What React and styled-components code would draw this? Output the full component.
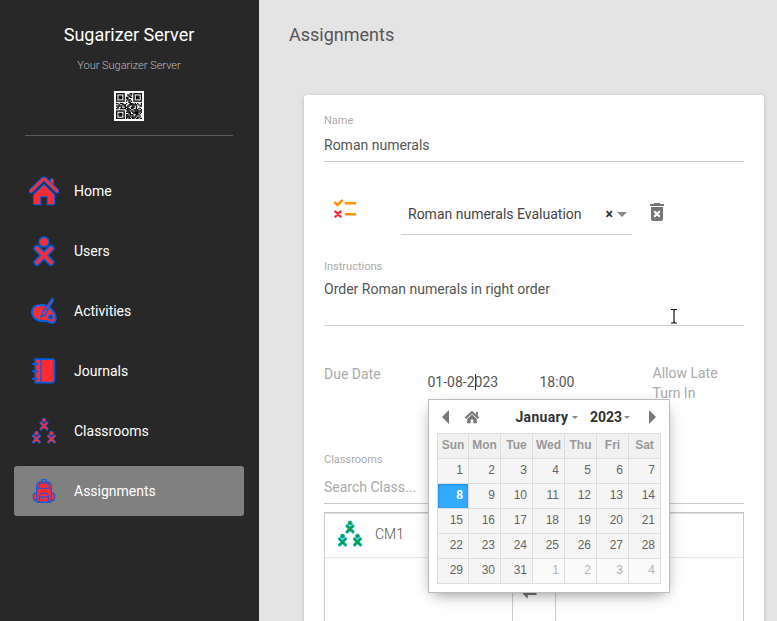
import React from "react";
import styled, { createGlobalStyle, css } from "styled-components";

const GlobalStyle = createGlobalStyle`
  *, *::before, *::after { box-sizing: border-box; }
  body {
    margin: 0;
    background: #e4e4e4;
    font-family: Roboto, "Liberation Sans", sans-serif;
    font-size: 14px;
    color: #555;
    overflow: hidden;
  }
`;

const RED = "#ff2b34";
const BLUE = "#005fe4";
const ORANGE = "#ff9300";

/* ---------- layout ---------- */

const Page = styled.div`
  display: flex;
  height: 621px;
  overflow: hidden;
  position: relative;
`;

const Sidebar = styled.aside`
  width: 259px;
  flex: none;
  background: #282828;
  color: #fff;
`;

const Brand = styled.header`
  margin: 0 26px 0 25px;
  height: 136px;
  padding-top: 23px;
  border-bottom: 1px solid #5a5a5a;
  display: flex;
  flex-direction: column;
  align-items: center;
`;

const BrandTitle = styled.div`
  font-size: 18px;
  line-height: 24px;
`;

const BrandSub = styled.div`
  margin-top: 11px;
  font-size: 11px;
  font-weight: 300;
  line-height: 16px;
  color: #bbb;
`;

const QrFrame = styled.div`
  margin-top: 17px;
  width: 30px;
  height: 30px;
  padding: 2px;
  background: #fff;
`;

const Nav = styled.nav`
  margin: 30px 15px 0 14px;
  display: flex;
  flex-direction: column;
  gap: 10px;
`;

const NavItem = styled.a`
  display: flex;
  align-items: center;
  gap: 15px;
  height: 50px;
  padding-left: 15px;
  border-radius: 3px;
  font-size: 14px;
  background: ${(p) => (p.$active ? "#808080" : "transparent")};
`;

const Main = styled.main`
  flex: 1;
  min-width: 0;
  padding: 0 13px 0 45px;
`;

const PageTitle = styled.h1`
  margin: 0 0 0 -15px;
  height: 95px;
  padding-top: 23px;
  font-size: 18px;
  font-weight: 400;
  line-height: 24px;
`;

const Card = styled.section`
  height: 560px;
  padding: 19px 20px;
  background: #fff;
  border-radius: 3px;
  box-shadow: 0 1px 4px rgba(0, 0, 0, 0.18);
`;

/* ---------- form ---------- */

const Label = styled.div`
  font-size: 11px;
  line-height: 14px;
  color: #aaa;
`;

const Field = styled.div`
  height: ${(p) => p.$height}px;
  padding-top: ${(p) => p.$top}px;
  padding-left: ${(p) => p.$indent || 0}px;
  width: ${(p) => (p.$width ? `${p.$width}px` : "auto")};
  border-bottom: 1px solid #ccc;
  line-height: 20px;
  color: ${(p) => (p.$muted ? "#aaa" : "#555")};
`;

const EvaluationRow = styled.div`
  display: flex;
  height: 98px;
  padding: 32px 0 0 9px;
`;

const SelectBox = styled(Field)`
  display: flex;
  margin-left: 44px;
  color: #444;
`;

const SelectValue = styled.span`
  width: 197.5px;
`;

const ClearMark = styled.span`
  width: 11.5px;
  font-weight: 700;
  color: #333;
`;

const Caret = styled.span`
  align-self: flex-start;
  margin-top: ${(p) => p.$top || 0}px;
  border: ${(p) => p.$size}px solid transparent;
  border-top-color: #888;
  border-bottom: 0;
`;

const ChecklistSlot = styled.div`
  padding-top: 1px;
`;

const TrashSlot = styled.div`
  margin-left: 13px;
  padding-top: 6px;
`;

const DueRow = styled.div`
  display: grid;
  grid-template-columns: 91.5px 100px 101px 80px;
  column-gap: 12px;
  height: 127px;
  padding-top: 37px;
  line-height: 20px;
  color: #aaa;
`;

const DueLabel = styled.span`
  padding-top: 1px;
`;

const TextCaret = styled.i`
  display: inline-block;
  width: 1px;
  height: 16px;
  margin-right: -1px;
  vertical-align: -3px;
  background: #222;
`;

const Lists = styled.div`
  display: flex;
  justify-content: space-between;
  margin-top: 8px;
  height: 160px;
  border-top: 1px solid #c4c4c4;
  box-shadow: inset 0 1px 0 #e2e2e2;
`;

const ClassList = styled.div`
  width: 189px;
  border: solid #ccc;
  border-width: 0 1px;
`;

const ClassItem = styled.div`
  height: 45px;
  display: flex;
  align-items: center;
  padding: 0 0 2px 10px;
  gap: 10px;
  border-bottom: 1px solid #e6e6e6;
  font-weight: 300;
`;

const Transfer = styled.div`
  padding-top: 62px;
  line-height: 0;
`;

/* ---------- date picker ---------- */

const Picker = styled.div`
  position: absolute;
  left: 428px;
  top: 399px;
  width: 242px;
  height: 194px;
  padding: 8px;
  background: #fff;
  border: 1px solid #bbb;
  box-shadow: 0 5px 15px -5px rgba(0, 0, 0, 0.5);
  color: #333;
`;

const PickerBar = styled.div`
  display: flex;
  align-items: center;
  height: 18px;
  margin-bottom: 7px;
  padding-left: 5px;
`;

const Arrow = styled.span`
  border: solid transparent;
  border-width: 7px 0;
  ${(p) =>
    p.$right
      ? css`border-left: 7px solid #777; margin-left: 19px;`
      : css`border-right: 7px solid #777;`}
`;

const HomeSlot = styled.span`
  margin: 0 0 0 15px;
  line-height: 0;
`;

const PickerLabel = styled.span`
  display: flex;
  align-items: center;
  gap: ${(p) => p.$gap}px;
  margin-left: ${(p) => p.$left}px;
  width: ${(p) => p.$width}px;
  font-size: 14px;
  font-weight: 700;
  letter-spacing: ${(p) => p.$tracking || 0}px;
  line-height: 18px;
`;

const Days = styled.div`
  display: grid;
  grid-template-columns: 31px repeat(6, 32px);
  grid-auto-rows: 25px;
  width: 224px;
  border: solid #ddd;
  border-width: 1px 0 0 1px;
  font-family: "Liberation Sans", Arial, sans-serif;
  font-size: 12px;
`;

const Day = styled.div`
  border: solid #ddd;
  border-width: 0 1px 1px 0;
  background: ${(p) => (p.$other ? "#fafafa" : "#f5f5f5")};
  color: ${(p) => (p.$other ? "#b3b3b3" : "#666")};
  padding-right: 5px;
  text-align: right;
  line-height: 23px;
  ${(p) =>
    p.$current &&
    css`
      background: #3af;
      color: #fff;
      font-weight: 700;
      box-shadow: inset 0 1px 3px #178fe5;
    `}
`;

const Weekday = styled(Day)`
  padding-right: 0;
  background: #f1f1f1;
  color: #999;
  font-weight: 700;
  text-align: center;
`;

const Pointer = styled.svg`
  position: absolute;
  left: 669px;
  top: 307px;
`;

/* ---------- icons ---------- */

const Kid = ({ fill = RED, stroke = BLUE }) => (
  <g strokeLinecap="round">
    <path d="M8 12.4 22 26.4M22 12.4 8 26.4" stroke={stroke} strokeWidth="7" />
    <circle cx="15" cy="6" r="4.8" fill={fill} stroke={stroke} strokeWidth="1.7" />
    <path d="M8 12.4 22 26.4M22 12.4 8 26.4" stroke={fill} strokeWidth="3.6" />
  </g>
);

const Svg30 = ({ children }) => (
  <svg width="30" height="30" viewBox="0 0 30 30" fill="none">{children}</svg>
);

const HomeIcon = () => (
  <Svg30>
    <path d="M23 10V4" stroke={BLUE} strokeWidth="4.2" strokeLinecap="round" />
    <path d="M23 10V4" stroke={RED} strokeWidth="2" strokeLinecap="round" />
    <path d="M2 15 13.8 3.6Q15 2.5 16.2 3.6L28 15" stroke={BLUE} strokeWidth="4.8" strokeLinecap="round" />
    <path d="M2 15 13.8 3.6Q15 2.5 16.2 3.6L28 15" stroke={RED} strokeWidth="2.7" strokeLinecap="round" />
    <path
      d="M15 8.4 4.4 18.6V27Q4.4 28.8 6.2 28.8H11.8V20.8H18.2V28.8H23.8Q25.6 28.8 25.6 27V18.6Z"
      fill={RED} stroke={BLUE} strokeWidth="1.1"
    />
  </Svg30>
);

const UserIcon = () => <Svg30><Kid /></Svg30>;

const PaletteIcon = () => (
  <Svg30>
    <path
      d="M3 15.5C3 11 7.5 9 13 9C21 9 27 17.5 26.8 22.8C26.6 26.8 24 27.8 20.5 26C16.5 24 12 26 8 23.8C4.8 22 3 19 3 15.5Z"
      fill={RED} stroke={BLUE} strokeWidth="2"
    />
    <circle cx="21.7" cy="21" r="1.8" fill="#282828" stroke={BLUE} strokeWidth="1.8" />
    <path
      d="M22.8 2.8Q24.8 2.5 24 5L17.8 15Q17.5 19.5 11.5 20.8Q13.2 19.2 13.2 17Q14 13.5 16 13.2Z"
      fill={RED} stroke={BLUE} strokeWidth="1.5" strokeLinejoin="round"
    />
  </Svg30>
);

const JournalIcon = () => (
  <Svg30>
    <path d="M6.3 3.2H23Q25.3 3.2 25.3 5.5V24Q25.3 26.6 23 26.6H6.3Z" fill={RED} stroke={BLUE} strokeWidth="1.8" />
    <path d="M12 3V27" stroke={BLUE} strokeWidth="1.5" />
    <path d="M3.8 8H8.4M3.8 15.3H8.4M3.8 22.7H8.4" stroke={BLUE} strokeWidth="2" strokeLinecap="round" />
  </Svg30>
);

const ClassIcon = ({ fill, stroke }) => (
  <Svg30>
    {[[9.7, 1.5], [2.2, 14.6], [17.2, 14.6]].map(([x, y]) => (
      <g key={`${x}-${y}`} transform={`translate(${x} ${y}) scale(.43) translate(-2.7 0)`}>
        <Kid fill={fill} stroke={stroke} />
      </g>
    ))}
  </Svg30>
);

const BagIcon = () => (
  <Svg30>
    <path d="M12.5 6V4.6Q12.5 3.4 15 3.4T17.5 4.6V6" stroke={BLUE} strokeWidth="1.1" />
    <rect x="4.2" y="17" width="21.6" height="7.6" rx="2.6" fill={RED} stroke={BLUE} strokeWidth="1.1" />
    <path d="M7.6 11Q7.6 5.7 12 5.7H18Q22.4 5.7 22.4 11V24.6Q22.4 26.3 20.5 26.3H9.5Q7.6 26.3 7.6 24.6Z" fill={RED} stroke={BLUE} strokeWidth="1.1" />
    <path d="M9.7 10Q9.7 7 13 7H17Q20.3 7 20.3 10T17 12.4H13Q9.7 12.4 9.7 10ZM7.6 14Q9 12.8 10.4 12.4M22.4 14Q21 12.8 19.6 12.4" stroke={BLUE} strokeWidth="1" />
    <path d="M10.3 26V20Q10.8 17 15 17T19.7 20V26M10.3 20.8H19.7M13.5 21V23M7.6 26.2H22.4" stroke={BLUE} strokeWidth="1" />
  </Svg30>
);

const ChecklistIcon = () => (
  <svg width="24" height="24" viewBox="0 0 24 24" fill="none">
    <path d="M2 7.6 4.6 10 9 5.7M12.8 8.3H22M12.8 19.3H22" stroke={ORANGE} strokeWidth="2.5" strokeLinecap="round" strokeLinejoin="round" />
    <path d="M2.3 16.4 7.7 21.7M7.7 16.4 2.3 21.7" stroke={RED} strokeWidth="2.3" strokeLinecap="round" />
  </svg>
);

const TrashIcon = () => (
  <svg width="24" height="24" viewBox="0 0 24 24" fill="#757575">
    <path d="M6 19c0 1.1.9 2 2 2h8c1.1 0 2-.9 2-2V7H6v12zm2.46-7.12 1.41-1.41L12 12.59l2.12-2.12 1.41 1.41L13.41 14l2.12 2.12-1.41 1.41L12 15.41l-2.12 2.12-1.41-1.41L10.59 14l-2.13-2.12zM15.5 4l-1-1h-5l-1 1H5v2h14V4z" />
  </svg>
);

const SwapIcon = () => (
  <svg width="30" height="30" viewBox="0 0 24 24" fill="#777">
    <path d="M6.99 11 3 15l3.99 4v-3H14v-2H6.99v-3zM21 9l-3.99-4v3H10v2h7.01v3L21 9z" />
  </svg>
);

const QR_ROWS = [
  "111111100001101111111",
  "100000100110101000001",
  "101110100011001011101",
  "101110101101101011101",
  "101110101100001011101",
  "100000100111001000001",
  "111111101010101111111",
  "000000000011000000000",
  "110111001001110101001",
  "001001110011111110101",
  "111110110110011010011",
  "010010011100111010000",
  "110111110110110010110",
  "000000001111001111001",
  "111111100110110111111",
  "100000101111011111101",
  "101110100011001111010",
  "101110101101110011100",
  "101110101111010110010",
  "100000101110111101100",
  "111111101011011011011",
];

const QrCode = () => (
  <svg width="26" height="26" viewBox="0 0 21 21" display="block">
    {QR_ROWS.flatMap((row, y) =>
      [...row].map((bit, x) =>
        bit === "1" ? <rect key={`${x}-${y}`} x={x} y={y} width="1.12" height="1.12" fill="#000" /> : null
      )
    )}
  </svg>
);

/* ---------- data ---------- */

const NAV = [
  ["Home", HomeIcon],
  ["Users", UserIcon],
  ["Activities", PaletteIcon],
  ["Journals", JournalIcon],
  ["Classrooms", ClassIcon],
  ["Assignments", BagIcon],
];

const WEEKDAYS = ["Sun", "Mon", "Tue", "Wed", "Thu", "Fri", "Sat"];
const CELLS = Array.from({ length: 35 }, (_, i) => (i < 31 ? i + 1 : i - 30));

const DatePicker = () => (
  <Picker>
    <PickerBar>
      <Arrow />
      <HomeSlot>
        <svg width="16" height="14" viewBox="0 0 16 14" fill="#777">
          <path d="M1.3 8.3 8 2.2 14.7 8.3" fill="none" stroke="#777" strokeWidth="2.2" />
          <path d="M12 2H14V6L12 4.3ZM8 4.6 3.2 9V13.2H6.7V9.4H9.3V13.2H12.8V9Z" />
        </svg>
      </HomeSlot>
      <PickerLabel $left={35.5} $width={74.5} $gap={3.5} $tracking={0.3}>
        January<Caret $size={3} $top={8} />
      </PickerLabel>
      <PickerLabel $left={0} $width={40} $gap={2}>2023<Caret $size={3} $top={8} /></PickerLabel>
      <Arrow $right />
    </PickerBar>
    <Days>
      {WEEKDAYS.map((d) => <Weekday key={d}>{d}</Weekday>)}
      {CELLS.map((d, i) => (
        <Day key={i} $other={i > 30} $current={i === 7}>{d}</Day>
      ))}
    </Days>
  </Picker>
);

export default function App() {
  return (
    <Page>
      <GlobalStyle />
      <Sidebar>
        <Brand>
          <BrandTitle>Sugarizer Server</BrandTitle>
          <BrandSub>Your Sugarizer Server</BrandSub>
          <QrFrame><QrCode /></QrFrame>
        </Brand>
        <Nav>
          {NAV.map(([name, Icon]) => (
            <NavItem key={name} $active={name === "Assignments"}><Icon />{name}</NavItem>
          ))}
        </Nav>
      </Sidebar>
      <Main>
        <PageTitle>Assignments</PageTitle>
        <Card>
          <Label>Name</Label>
          <Field $height={34} $top={7}>Roman numerals</Field>
          <EvaluationRow>
            <ChecklistSlot><ChecklistIcon /></ChecklistSlot>
            <SelectBox $height={41} $top={10} $indent={7} $width={231}>
              <SelectValue>Roman numerals Evaluation</SelectValue>
              <ClearMark>×</ClearMark>
              <Caret $size={5} $top={8} />
            </SelectBox>
            <TrashSlot><TrashIcon /></TrashSlot>
          </EvaluationRow>
          <Label>Instructions</Label>
          <Field $height={52} $top={5}>Order Roman numerals in right order</Field>
          <DueRow>
            <DueLabel>Due Date</DueLabel>
            <Field $height={37} $top={9}>01-08-2<TextCaret />023</Field>
            <Field $height={37} $top={9}>18:00</Field>
            <span>Allow Late Turn In</span>
          </DueRow>
          <Label>Classrooms</Label>
          <Field $height={37} $top={10} $muted>Search Class...</Field>
          <Lists>
            <ClassList>
              <ClassItem><ClassIcon fill="#00a838" stroke="#00a8d0" />CM1</ClassItem>
            </ClassList>
            <Transfer><SwapIcon /></Transfer>
            <ClassList><ClassItem /></ClassList>
          </Lists>
        </Card>
      </Main>
      <DatePicker />
      <Pointer width="10" height="19" viewBox="0 0 10 19" fill="none">
        <path d="M2 2.5H4.2L5 3.3 5.8 2.5H8M5 3V15.5M2 16H4.2L5 15.2 5.8 16H8" stroke="#fff" strokeWidth="3" />
        <path d="M2 2.5H4.2L5 3.3 5.8 2.5H8M5 3V15.5M2 16H4.2L5 15.2 5.8 16H8" stroke="#111" strokeWidth="1.2" />
      </Pointer>
    </Page>
  );
}
